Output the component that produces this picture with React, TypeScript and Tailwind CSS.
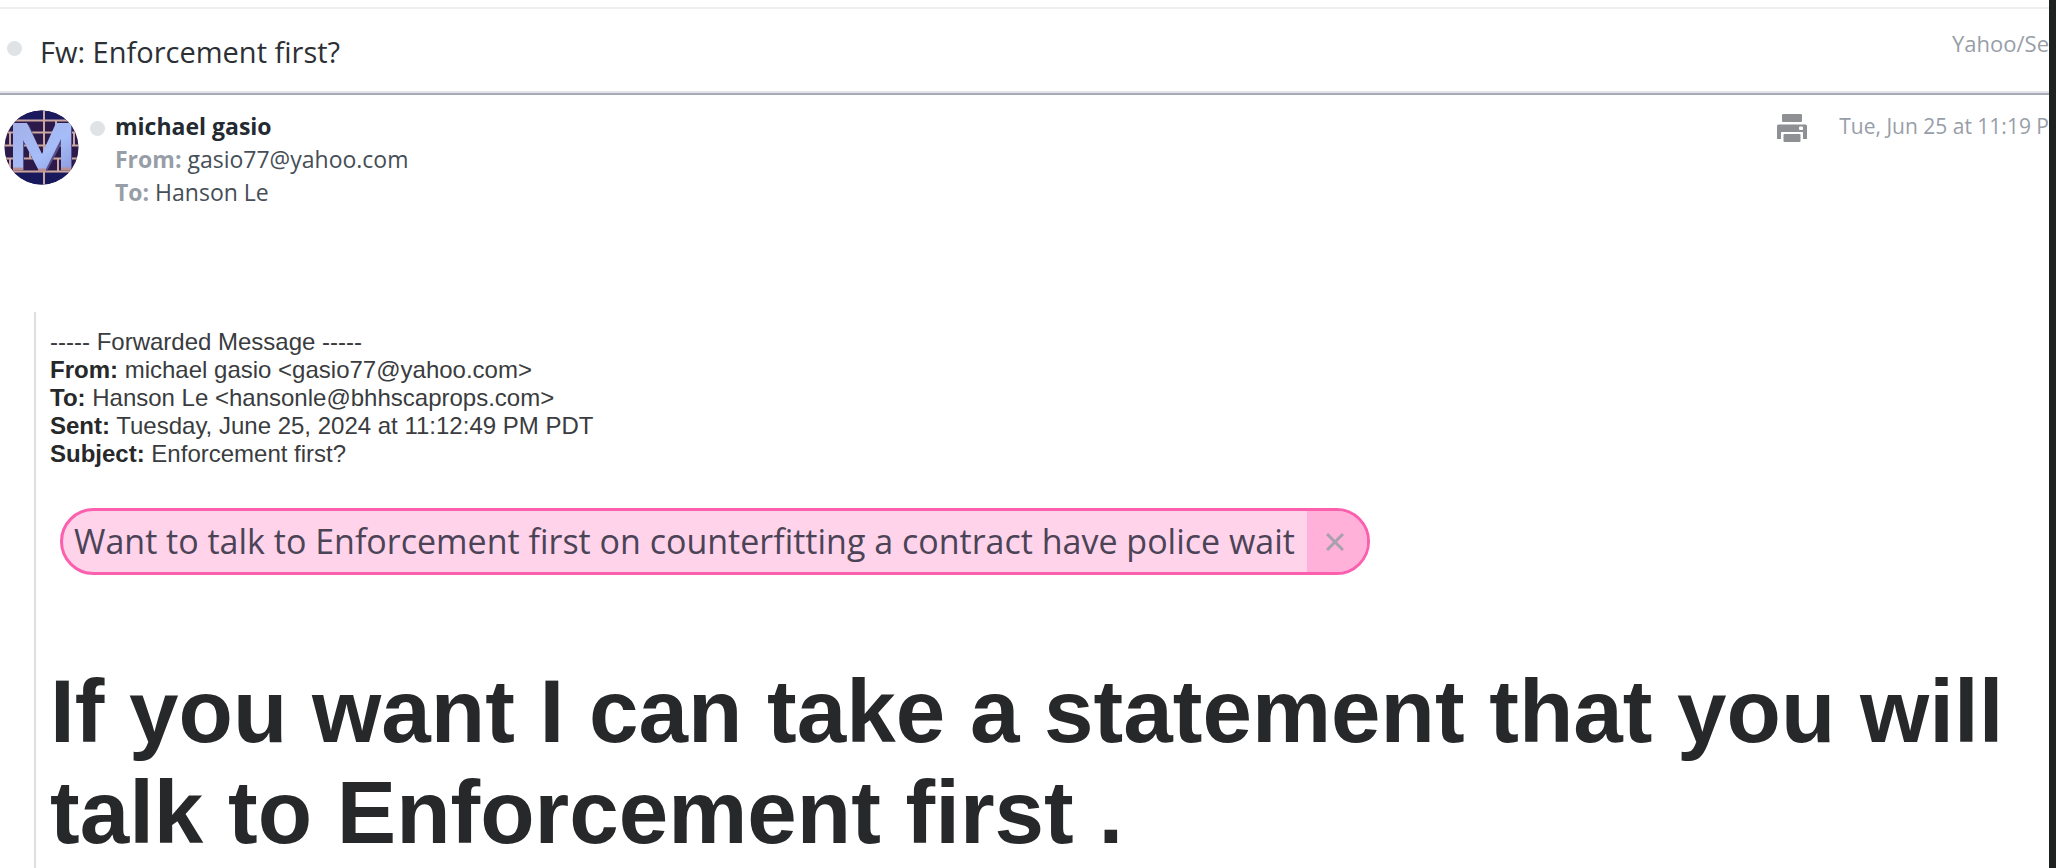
import React from 'react';

interface Address {
  label: string;
  value: string;
}

const recipients: Address[] = [
  { label: 'From:', value: 'gasio77@yahoo.com' },
  { label: 'To:', value: 'Hanson Le' }
];

const forwardedHeaders: Address[] = [
  { label: 'From:', value: 'michael gasio <gasio77@yahoo.com>' },
  { label: 'To:', value: 'Hanson Le <hansonle@bhhscaprops.com>' },
  { label: 'Sent:', value: 'Tuesday, June 25, 2024 at 11:12:49 PM PDT' },
  { label: 'Subject:', value: 'Enforcement first?' }
];

const ReadDot: React.FC = () => <span className="block size-[15px] shrink-0 rounded-full bg-[#dfe3e6]" />;

const Avatar: React.FC = () => (
  <svg className="size-[75px] shrink-0" viewBox="0 0 75 75" aria-hidden="true">
    <defs>
      <clipPath id="avatar-clip">
        <circle cx="37.5" cy="37.5" r="37" />
      </clipPath>
      <linearGradient id="avatar-letter" x1="0" y1="0" x2="1" y2="1">
        <stop offset="0" stopColor="#a3b0e8" />
        <stop offset="0.6" stopColor="#a6bdf8" />
        <stop offset="1" stopColor="#8d9de0" />
      </linearGradient>
    </defs>
    <g clipPath="url(#avatar-clip)">
      <rect width="75" height="75" fill="#2b1a4a" />
      <rect width="75" height="10" fill="#1c1a5e" />
      <rect y="63" width="75" height="12" fill="#17195c" />
      {/* Brick joints */}
      <g stroke="#caa7a0" strokeWidth="2">
        <path d="M0 10.5H75M0 22.5H75M0 35.5H75M0 48.5H75M0 61.5H75" />
        <path d="M40 0V75M52 10V22M26 35V48M6 22V35M6 48V61M70 22V35M54 48V61" />
      </g>
      {/* Raised letter */}
      <path d="M10 15H25L38 45L52 15H68V60H59V31L43 61H35L20 32V60H10Z" fill="#5a4f86" />
      <path d="M9 13H23L38 44L52 13H67V58H57V29L42 59H34L19 30V58H9Z" fill="url(#avatar-letter)" />
      <path d="M9 59H19M34 60H42M57 59H67" stroke="#b98f93" strokeWidth="3" />
    </g>
  </svg>
);

const PrintIcon: React.FC = () => (
  <svg className="h-7 w-[30px]" viewBox="0 0 30 28" aria-hidden="true">
    <rect x="5" y="0" width="20" height="8" rx="1" fill="#8e9094" />
    <path d="M1.5 10.5H28.5Q30 10.5 30 12V25H26V18H4V25H0V12Q0 10.5 1.5 10.5Z" fill="#8e9094" />
    <rect x="22" y="12.5" width="4" height="3.5" rx="1" fill="#fff" />
    <rect x="6.5" y="20" width="17" height="8" rx="1" fill="#8e9094" />
  </svg>
);

const SubjectBar: React.FC = () => (
  <header className="flex h-[88px] items-start justify-between border-y-2 border-t-[#eceff2] border-b-[#a9acb4] pl-[7px] shadow-[inset_0_-2px_0_#e3e4ea]">
    <div className="flex items-start gap-[18px] pt-[22px]">
      <div className="pt-[10px]">
        <ReadDot />
      </div>
      <h1 className="text-[29px] leading-[42px] text-[#2c3035]">Fw: Enforcement first?</h1>
    </div>
    <span className="pt-[18px] text-[22px] leading-8 text-[#979ea8]">Yahoo/Se</span>
  </header>
);

const MessageHeader: React.FC = () => (
  <section className="flex items-start pt-[15px] pl-1">
    <Avatar />
    <div className="pt-[11px] pl-[11px]">
      <ReadDot />
    </div>
    <div className="pl-[10px] text-[23px] leading-[33px] text-[#464e56]">
      <h2 className="font-bold text-[#232a31]">michael gasio</h2>
      {recipients.map((item) => (
        <p key={item.label}>
          <span className="font-bold text-[#979ea8]">{item.label}</span> {item.value}
        </p>
      ))}
    </div>
    <div className="ml-auto flex items-start gap-8">
      <button type="button" aria-label="Print" className="pt-1">
        <PrintIcon />
      </button>
      <time className="text-[21px] leading-[33px] text-[#979ea8]">Tue, Jun 25 at 11:19 P</time>
    </div>
  </section>
);

const Tag: React.FC = () => (
  <div className="ml-[10px] flex h-[67px] w-fit items-stretch overflow-hidden rounded-full border-[3px] border-[#fb5fae] bg-[#ffd3ea] font-['Open_Sans','Noto_Sans',sans-serif]">
    <span className="pr-3 pl-[11px] text-[34px] leading-[61px] whitespace-nowrap text-[#4b4457]">
      Want to talk to Enforcement first on counterfitting a contract have police wait
    </span>
    <button type="button" aria-label="Remove" className="flex w-[60px] items-center justify-center bg-[#ffb1d9] pr-1">
      <svg className="size-[18px]" viewBox="0 0 18 18" fill="none" stroke="#a8a0ac" strokeWidth="3" aria-hidden="true">
        <path d="M1 1L17 17M17 1L1 17" />
      </svg>
    </button>
  </div>
);

const App: React.FC = () => {
  return (
    <div className="min-h-screen flex flex-col overflow-hidden border-r-[7px] border-[#1f2020] bg-white pt-[7px] font-['Open_Sans','Noto_Sans',sans-serif]">
      <SubjectBar />
      <MessageHeader />

      {/* Forwarded mail */}
      <main className="mt-[103px] ml-[34px] grow border-l-2 border-[#dfdfe1] pt-4 pl-[14px] font-['Liberation_Sans',Arial,sans-serif] text-[#26282a]">
        <div className="text-[24px] leading-7 text-[#3a3c40]">
          <p>----- Forwarded Message -----</p>
          {forwardedHeaders.map((item) => (
            <p key={item.label}>
              <b className="text-[#26282a]">{item.label}</b> {item.value}
            </p>
          ))}
        </div>
        <div className="pt-10">
          <Tag />
        </div>
        <p className="pt-[86px] text-[89px] leading-[101px] font-bold">
          If you want I can take a statement that you will talk to Enforcement first .
        </p>
      </main>
    </div>
  );
};

export default App;
